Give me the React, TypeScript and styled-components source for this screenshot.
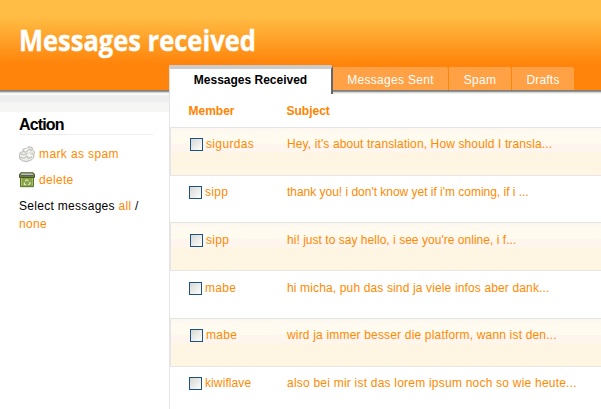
import React from "react";
import styled, { createGlobalStyle, css } from "styled-components";

const Global = createGlobalStyle`
  * { box-sizing: border-box; }
  body { margin: 0; background: #fff; font: 12px/18px "Liberation Sans", Arial, sans-serif; color: #000; overflow: hidden; }
  h1, h2 { margin: 0; }
`;

const Page = styled.div`
  width: 601px;
  height: 409px;
  display: flex;
  flex-direction: column;
  overflow: hidden;
`;

const Header = styled.header`
  height: 94px;
  flex: none;
  display: flex;
  flex-direction: column;
  justify-content: space-between;
  background: linear-gradient(
    #ffbd45 0, #ffbd45 16px, #ff840b 64px, #ff840b 90px,
    #808080 90px, #808080 91px, #929292 91px, #929292 92px,
    #d6d6d2 92px, #d6d6d2 93px, #f1f1ee 93px
  );
`;

const Title = styled.h1`
  align-self: flex-start;
  margin: 20px 0 0 19px;
  font: bold 29px/40px "Open Sans", "Noto Sans", sans-serif;
  color: #fff;
  white-space: nowrap;
  -webkit-text-stroke: 0.4px #fff;
  transform: scaleX(0.879);
  transform-origin: left;
`;

const Tabs = styled.nav`
  display: flex;
  margin-left: 169px;
  height: 29px;
`;

const Tab = styled.a<{ $w: number; $ls?: number; $active?: boolean }>`
  width: ${(p) => p.$w}px;
  letter-spacing: ${(p) => p.$ls ?? 0}px;
  text-align: center;
  white-space: nowrap;
  ${(p) =>
    p.$active
      ? css`
          height: 29px;
          border-top: 4px solid #ccc;
          border-left: 1px solid #ddd;
          border-right: 2px solid #666;
          border-top-right-radius: 3px;
          background: #fff;
          font-weight: bold;
          line-height: 22px;
        `
      : css`
          height: 23px;
          margin: 2px 1px 0 0;
          border-top-right-radius: 2px;
          background: #ffa144;
          color: #fff;
          line-height: 26px;
        `}
`;

const Columns = styled.div`
  flex: 1;
  display: flex;
`;

const Sidebar = styled.aside`
  width: 169px;
  flex: none;
  padding: 21px 16px 0 19px;
  background: linear-gradient(#fff 1px, #eee 1px, #eee 8px, #f6f6f5 8px, #f6f6f5 18px, #fff 18px);
`;

const SideTitle = styled.h2`
  height: 20px;
  border-bottom: 1px solid #eee;
  font-size: 16px;
  line-height: 19px;
  letter-spacing: -0.85px;
`;

const Action = styled.div`
  display: flex;
  align-items: center;
  gap: 4px;
  height: 26px;
  svg { flex: none; }
`;

const Actions = styled.div`
  padding-top: 6px;
`;

const Run = styled.span<{ $ls?: number; $link?: boolean }>`
  letter-spacing: ${(p) => p.$ls ?? 0}px;
  color: ${(p) => (p.$link ? "#ff8a00" : "inherit")};
  white-space: nowrap;
`;

const SelectLine = styled.div`
  margin-top: 4px;
`;

const Main = styled.main`
  flex: 1;
  border-left: 1px solid #e5e5e5;
`;

const HeadRow = styled.div`
  height: 33px;
  display: grid;
  grid-template-columns: 98px 1fr;
  padding: 8px 0 0 18.5px;
  color: #ff8400;
  font-weight: bold;
`;

const Row = styled.div<{ $h: number; $top: number; $shade?: boolean }>`
  height: ${(p) => p.$h}px;
  display: grid;
  grid-template-columns: ${(p) => (p.$shade ? 97 : 98)}px 1fr;
  align-items: start;
  padding: ${(p) => p.$top}px 0 0 19px;
  ${(p) =>
    p.$shade &&
    css`
      border: 1px solid #e5e5e5;
      border-right: 0;
      background: linear-gradient(
        #fef7f0 0, #fef7f0 2px, #fffaf0 4px, #fffbee 16px,
        #fff5ef 16px, #fff5ef 24px, #fef5e3 24px
      );
    `}
`;

const Member = styled.div`
  display: flex;
  align-items: flex-start;
  gap: 3px;
`;

const Check = styled.i`
  width: 13px;
  height: 13px;
  margin-top: 3px;
  border: 1px solid #1c5180;
  background: linear-gradient(135deg, #d6d6d2, #fff);
`;

const PaperIcon = () => (
  <svg width="16" height="16" viewBox="0 0 16 16">
    <path d="M4 3.2 7.5 2.5 9 .8 13 1.3l.6 2.4 1.9 2-.6 3-.2 3-2.6 2.4-4 1.4-4-.4L.8 13 .5 9.5 1 6.5l3-.8z" fill="#ebebe7" stroke="#a9aba5" strokeWidth=".8" />
    <path d="m4.5 5.5 2.5.7 3-3 2.5.8-1.5 2.5 3 1.5M2 8l3 1.2L8.5 7M1.5 11.5 5 12l3-2 1 2.5 4-1.5" fill="none" stroke="#a9aca5" strokeWidth=".8" />
    <path d="m6 5 2.5-2.4M10.5 5.5l2 1M3 10.3l3 .2M9 9l3 .3" stroke="#fff" strokeWidth="1.1" />
  </svg>
);

const BinIcon = () => (
  <svg width="16" height="16" viewBox="0 0 16 16">
    <path d="M1.5 4.5h13v10.2h-13z" fill="#87a348" stroke="#5b742c" />
    <path d="M2.5 5.5v8.2M13.5 5.5v8.2" stroke="#a7bf68" />
    <path d="M1.8.8h12.4l1.3 1.7v3H.5v-3z" fill="#6c8133" stroke="#47542e" />
    <path d="M2.4 1.5h11.2l.6 1.8H1.8z" fill="#c8cbc7" />
    <path d="M2 3.4h12" stroke="#555c55" />
    <path d="m6.2 9.2 1.5-1.5 1.7 1.2M10.7 9.8l.4 2-1.9 1M7.2 12.8l-2-.5.3-2" fill="none" stroke="#dce7c1" strokeWidth="1.2" />
  </svg>
);

const rows = [
  { h: 49, top: 7, member: "sigurdas", mls: 0.35, subject: "Hey, it's about translation, How should I transla...", ls: 0.12 },
  { h: 46, top: 7, member: "sipp", mls: 0.3, subject: "thank you! i don't know yet if i'm coming, if i ...", ls: -0.02 },
  { h: 49, top: 8, member: "sipp", mls: 0.3, subject: "hi! just to say hello, i see you're online, i f...", ls: 0.03 },
  { h: 47, top: 8, member: "mabe", mls: 0.3, subject: "hi micha, puh das sind ja viele infos aber dank...", ls: 0.14 },
  { h: 49, top: 7, member: "mabe", mls: 0.3, subject: "wird ja immer besser die platform, wann ist den...", ls: 0.18 },
  { h: 42, top: 7, member: "kiwiflave", mls: 0.1, subject: "also bei mir ist das lorem ipsum noch so wie heute...", ls: 0.22 },
];

export default function App() {
  return (
    <Page>
      <Global />
      <Header>
        <Title>Messages received</Title>
        <Tabs>
          <Tab $w={164} $active>Messages Received</Tab>
          <Tab $w={115} $ls={0.3}>Messages Sent</Tab>
          <Tab $w={62} $ls={0.3}>Spam</Tab>
          <Tab $w={62} $ls={0.2}>Drafts</Tab>
        </Tabs>
      </Header>
      <Columns>
        <Sidebar>
          <SideTitle>Action</SideTitle>
          <Actions>
            <Action><PaperIcon /><Run $link $ls={0.38}>mark as spam</Run></Action>
            <Action><BinIcon /><Run $link $ls={0.3}>delete</Run></Action>
          </Actions>
          <SelectLine>
            <Run $ls={0.3}>Select messages <Run $link $ls={0.3}>all</Run> /</Run>
            <br />
            <Run $link $ls={0.3}>none</Run>
          </SelectLine>
        </Sidebar>
        <Main>
          <HeadRow><span>Member</span><span>Subject</span></HeadRow>
          {rows.map((r, i) => (
            <Row key={i} $h={r.h} $top={r.top} $shade={i % 2 === 0}>
              <Member><Check /><Run $link $ls={r.mls}>{r.member}</Run></Member>
              <Run $link $ls={r.ls}>{r.subject}</Run>
            </Row>
          ))}
        </Main>
      </Columns>
    </Page>
  );
}
